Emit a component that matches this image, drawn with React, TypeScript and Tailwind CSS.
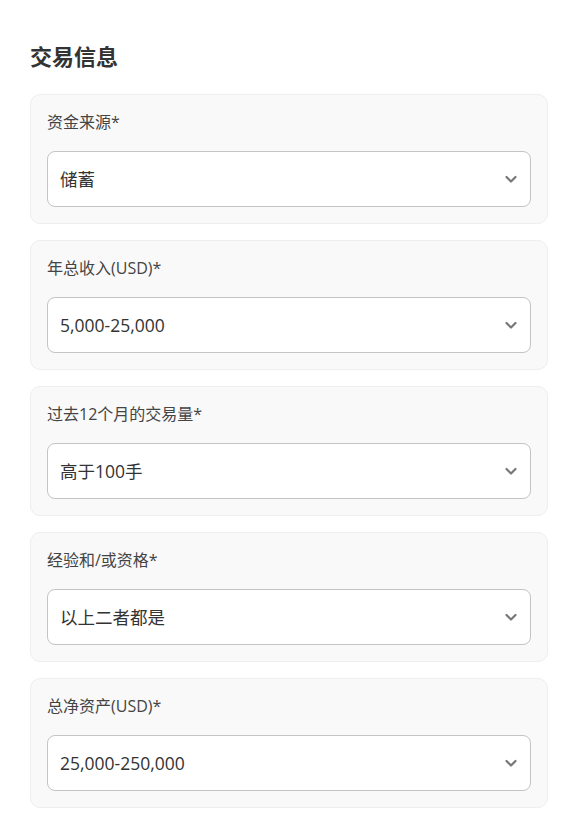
import React from "react";

const fields = [
  { label: "资金来源*", value: "储蓄" },
  { label: "年总收入(USD)*", value: "5,000-25,000" },
  { label: "过去12个月的交易量*", value: "高于100手" },
  { label: "经验和/或资格*", value: "以上二者都是" },
  { label: "总净资产(USD)*", value: "25,000-250,000" },
];

function Chevron() {
  return (
    <svg width="14" height="14" viewBox="0 0 14 14" fill="none">
      <path d="M2.5 5l4.5 4.5L11.5 5" stroke="#777" strokeWidth="2.2" strokeLinecap="round" strokeLinejoin="round" />
    </svg>
  );
}

export default function App() {
  return (
    <div
      className="min-h-[820px] bg-white px-[30px] pt-[40px]"
      style={{ fontFamily: '"Open Sans", "Noto Sans CJK SC", sans-serif' }}
    >
      <h2 className="text-[22px] font-bold leading-[32px] text-[#333]">交易信息</h2>
      <div className="mt-[22px] flex w-[518px] flex-col gap-4">
        {fields.map((f) => (
          <div key={f.label} className="rounded-[10px] border border-[#eeeeee] bg-[#f9f9f9] px-4 pb-4 pt-4">
            <div className="mb-[18px] text-[16px] leading-[22px] text-[#444]">{f.label}</div>
            <div className="flex h-[56px] items-center justify-between rounded-[8px] border border-[#c4c4c4] bg-white pl-3 pr-[12px]">
              <span className="text-[17.5px] text-[#333]">{f.value}</span>
              <Chevron />
            </div>
          </div>
        ))}
      </div>
    </div>
  );
}
